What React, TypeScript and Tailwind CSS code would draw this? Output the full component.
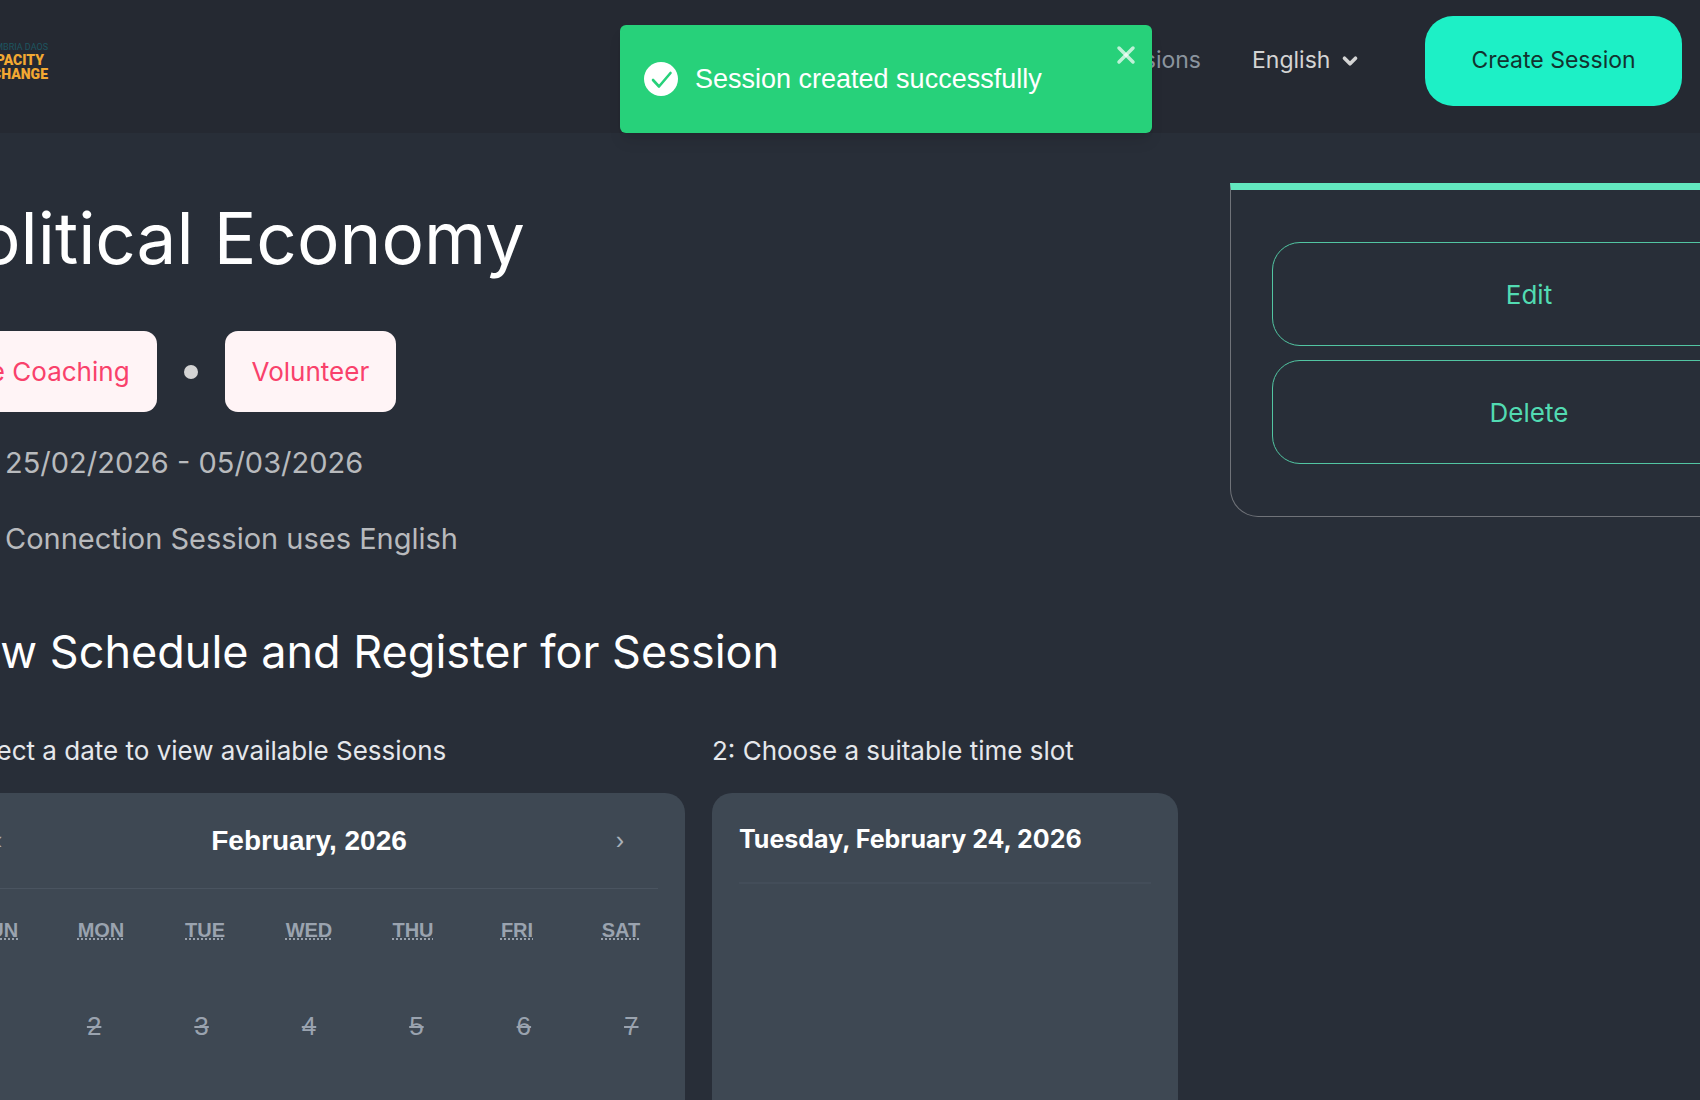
import React, { useState } from 'react';
import { ChevronDown, X } from 'lucide-react';

const WEEKDAYS = ['Sun', 'Mon', 'Tue', 'Wed', 'Thu', 'Fri', 'Sat'];
const FIRST_WEEK = [1, 2, 3, 4, 5, 6, 7];
const SECOND_WEEK = [8, 9, 10, 11, 12, 13, 14];

function Toast({ onClose }: { onClose: () => void }) {
  return (
    <div
      role="alert"
      className="absolute top-[25px] left-[620px] z-10 flex h-[108px] w-[532px] items-center gap-[17px] rounded-md bg-[#27d17a] pl-6 font-['Liberation_Sans',sans-serif] text-[27px] text-white shadow-lg"
    >
      <svg viewBox="0 0 34 34" className="size-[34px]" aria-hidden="true">
        <circle cx="17" cy="17" r="17" fill="white" />
        <path d="M9 18l6 6.500L26.500 11" fill="none" stroke="#27d17a" strokeWidth="2.600" strokeLinecap="round" strokeLinejoin="round" />
      </svg>
      <span>Session created successfully</span>
      <button type="button" aria-label="Close" onClick={onClose} className="absolute top-4 right-3 text-white/70">
        <X size={28} strokeWidth={3} />
      </button>
    </div>
  );
}

function Header() {
  const [language, setLanguage] = useState('en');

  return (
    <header className="flex h-[133px] items-center justify-between bg-[#252932] pr-[18px] pb-3">
      <a
        href="#home"
        className="-ml-8 flex w-20 flex-col items-end font-['Roboto',sans-serif] text-[14px] leading-[14px] font-black text-[#f2a832]"
      >
        <span className="text-[9px] leading-[12px] font-normal text-[#1d5560]">UMBRIA DAOS</span>
        <span className="pr-1">CAPACITY</span>
        <span>EXCHANGE</span>
      </a>
      <nav className="flex items-center text-[23px]">
        <a href="#sessions" className="mr-[51px] text-[#8b949e]">Sessions</a>
        <div className="relative mr-16 flex items-center">
          <select
            aria-label="Language"
            value={language}
            onChange={(e) => setLanguage(e.target.value)}
            className="w-[109px] appearance-none bg-transparent text-[#d4d4d4]"
          >
            <option value="en">English</option>
          </select>
          <ChevronDown size={22} strokeWidth={4} className="pointer-events-none absolute right-0 text-[#d4d4d4]" />
        </div>
        <button type="button" className="h-[90px] w-[257px] rounded-[28px] bg-[#1df0c6] text-[#12332f]">
          Create Session
        </button>
      </nav>
    </header>
  );
}

function Calendar() {
  return (
    <section className="w-[752px] rounded-t-[20px] bg-[#3e4853] font-['Liberation_Sans',sans-serif]">
      <div className="mx-[27px] flex h-[96px] items-center justify-between border-b border-[#4a5460] px-[34px]">
        <button type="button" aria-label="Previous month" className="text-[25px] text-[#a9b0b9]">‹</button>
        <h3 className="text-[28px] font-bold text-white">February, 2026</h3>
        <button type="button" aria-label="Next month" className="text-[25px] text-[#a9b0b9]">›</button>
      </div>
      <div className="grid h-[82px] grid-cols-7 items-center px-3 text-center text-[20px] font-bold text-[#9aa3af] uppercase">
        {WEEKDAYS.map((day) => (
          <abbr key={day} title={day}>{day}</abbr>
        ))}
      </div>
      {[FIRST_WEEK, SECOND_WEEK].map((week) => (
        <div key={week[0]} className="grid h-[110px] grid-cols-7 items-center text-[26px] text-[#9aa3af]">
          {week.map((day) => (
            <button key={day} type="button" disabled className="line-through">{day}</button>
          ))}
        </div>
      ))}
    </section>
  );
}

export default function App() {
  const [showToast, setShowToast] = useState(true);

  return (
    <div className="relative h-screen overflow-hidden bg-[#282e38] font-['Inter',sans-serif] text-white">
      {showToast && <Toast onClose={() => setShowToast(false)} />}
      <Header />

      <div className="-mr-32 -ml-[67px] flex items-start gap-[52px] pt-[50px]">
        <main className="min-w-0 flex-1">
          <h1 className="pt-[10px] text-[71px] leading-[90px]">Political Economy</h1>

          <div className="mt-12 flex items-center gap-[27px] text-[26px] text-[#f9416b]">
            <span className="flex h-[81px] items-center rounded-[13px] bg-[#fff4f6] px-[27px]">Life Coaching</span>
            <span className="size-[14px] rounded-full bg-[#d4d4d4]" />
            <span className="flex h-[81px] items-center rounded-[13px] bg-[#fff4f6] px-[27px]">Volunteer</span>
          </div>

          <div className="mt-[13px] pl-[72px] text-[29px] leading-[76px] text-[#b8babd]">
            <p>25/02/2026 - 05/03/2026</p>
            <p>Connection Session uses English</p>
          </div>

          <h2 className="mt-[50px] text-[45px] leading-[50px]">View Schedule and Register for Session</h2>

          <div className="mt-[56px] flex gap-[27px]">
            <div>
              <p className="mb-[24px] text-[26px] leading-[36px] text-[#e5e7eb]">1: Select a date to view available Sessions</p>
              <Calendar />
            </div>
            <div className="flex flex-1 flex-col">
              <p className="mb-[24px] text-[26px] leading-[36px] text-[#e5e7eb]">2: Choose a suitable time slot</p>
              <section className="flex-1 rounded-t-[20px] bg-[#3e4853] px-[27px]">
                <h3 className="flex h-[91px] items-center border-b-2 border-[#434d59] pt-1 text-[25px] font-bold">
                  Tuesday, February 24, 2026
                </h3>
              </section>
            </div>
          </div>
        </main>

        <aside className="flex w-[598px] flex-col gap-[14px] rounded-b-[28px] border border-t-[7px] border-[#707379] border-t-[#62e8bf] px-[41px] pt-[52px] pb-[52px] text-[26px] text-[#52dbb2]">
          <button type="button" className="h-[104px] rounded-[28px] border border-[#52c5a2]">Edit</button>
          <button type="button" className="h-[104px] rounded-[28px] border border-[#52c5a2]">Delete</button>
        </aside>
      </div>
    </div>
  );
}
